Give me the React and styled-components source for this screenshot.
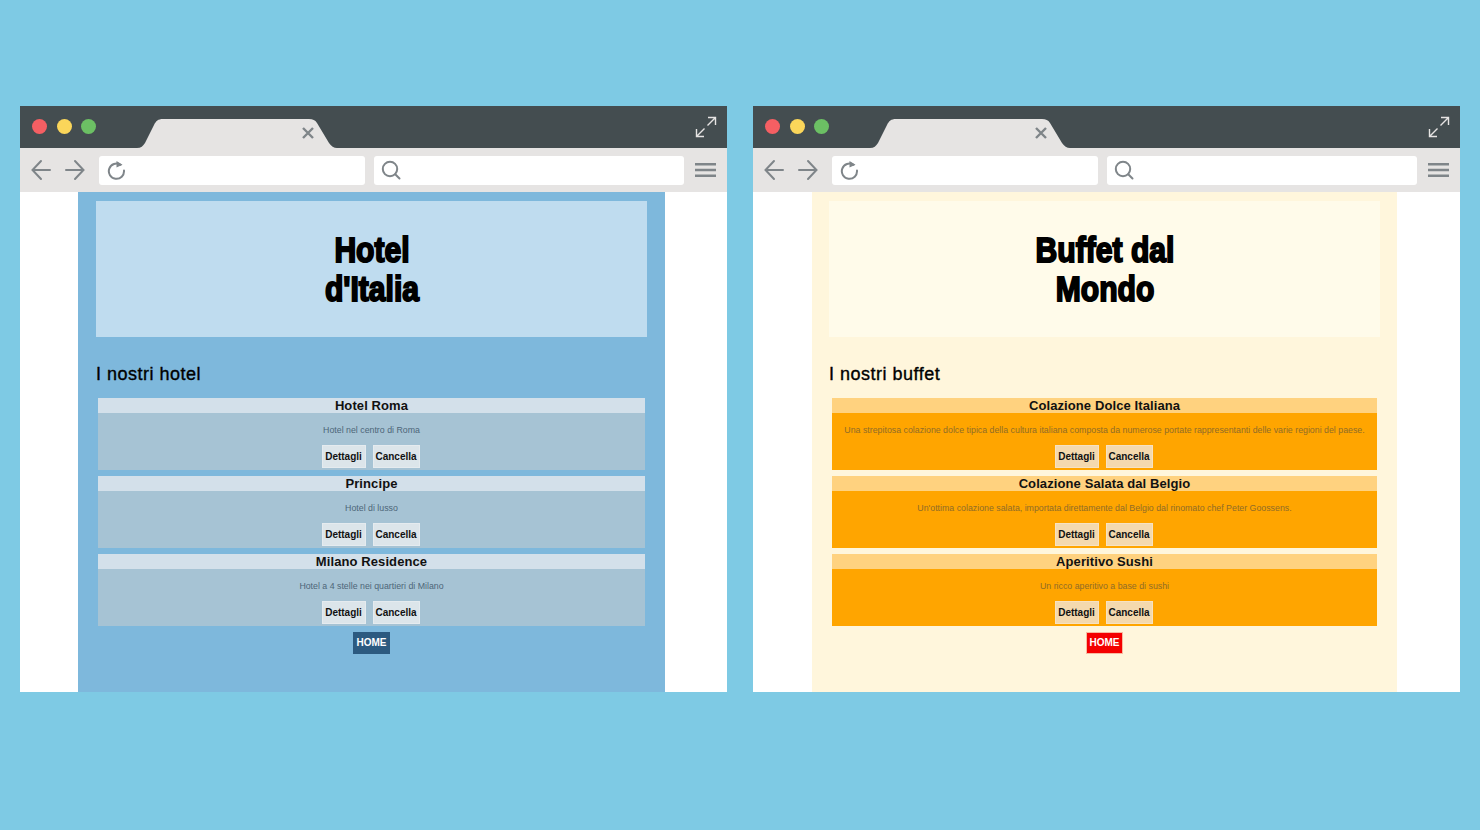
import React from 'react';
import styled, { createGlobalStyle } from 'styled-components';

const themes = {
  hotel: {
    page: '#7eb8dc', header: '#bfdcef', title: '#d3e0ea', body: '#a6c3d4',
    text: '#4d6678', button: '#dce5ea', home: '#2c5a80', homeBorder: '#2c5a80',
  },
  buffet: {
    page: '#fff6dc', header: '#fffbea', title: '#ffd27f', body: '#ffa500',
    text: '#8f6c28', button: '#f4d9ae', home: '#f40000', homeBorder: '#f8b9a0',
  },
};

const Global = createGlobalStyle`
  html, body { margin: 0; padding: 0; }
  body { background: #7ecae4; font-family: "Liberation Sans", Arial, sans-serif; }
`;

const Stage = styled.div`
  width: 1480px;
  height: 830px;
  box-sizing: border-box;
  padding: 106px 20px 0;
  display: flex;
  justify-content: space-between;
  align-items: flex-start;
`;

const Win = styled.section`
  width: 707px;
  height: 586px;
  display: flex;
  flex-direction: column;
  background: #fff;
`;

const TitleBar = styled.div`
  height: 42px;
  flex: none;
  background: #444d50;
  display: flex;
  padding: 0 10px 0 12px;
  box-sizing: border-box;
`;

const Dots = styled.div`
  display: flex;
  gap: 9.5px;
  padding-top: 13px;
`;

const Dot = styled.span`
  width: 15px;
  height: 15px;
  border-radius: 50%;
  background: ${p => p.$color};
`;

const Tab = styled.svg`
  width: 201px;
  height: 29px;
  margin: 13px 0 0 41px;
  flex: none;
  display: block;
`;

const Expand = styled.svg`
  width: 22px;
  height: 22px;
  margin: 10px 0 0 auto;
`;

const ToolBar = styled.div`
  height: 44px;
  flex: none;
  background: #e6e4e3;
  display: flex;
  align-items: center;
  box-sizing: border-box;
  padding: 0 11px 0 11px;
`;

const NavIcon = styled.svg`
  width: 20px;
  height: 24px;
  margin-right: ${p => p.$gap}px;
  flex: none;
`;

const Field = styled.div`
  height: 29px;
  width: ${p => p.$width}px;
  background: #fff;
  border-radius: 3px;
  margin-right: ${p => p.$gap}px;
  display: flex;
  align-items: center;
  padding-left: ${p => p.$inset}px;
  box-sizing: border-box;
  flex: none;
`;

const Burger = styled.svg`
  width: 21px;
  height: 16px;
  flex: none;
`;

const Viewport = styled.div`
  flex: 1;
  display: flex;
  justify-content: center;
  padding-right: 4px;
`;

const Page = styled.main`
  width: ${p => p.$width}px;
  background: ${p => p.$t.page};
  padding-top: 9px;
  display: flex;
  justify-content: center;
`;

const Column = styled.div`
  width: 551px;
`;

const Banner = styled.header`
  height: 136px;
  background: ${p => p.$t.header};
  display: flex;
  align-items: center;
  justify-content: center;
`;

const BigTitle = styled.h1`
  margin: 0;
  width: 200px;
  text-align: center;
  font-family: Impact, "Liberation Sans", sans-serif;
  font-size: 35px;
  line-height: 39px;
  font-weight: 700;
  color: #000;
  -webkit-text-stroke: 1.9px #000;
  transform: scaleX(0.86);
`;

const Heading = styled.h2`
  margin: 27px 0 14px;
  font-size: 18px;
  line-height: 20px;
  font-weight: 400;
  letter-spacing: 0.5px;
  color: #000;
  -webkit-text-stroke: 0.35px #000;
`;

const List = styled.div`
  display: flex;
  flex-direction: column;
  gap: 6px;
  padding: 0 ${p => p.$inset}px;
`;

const Card = styled.article`
  background: ${p => p.$t.body};
  height: 72px;
  text-align: center;
`;

const CardTitle = styled.h3`
  margin: 0;
  height: 15px;
  line-height: 15px;
  background: ${p => p.$t.title};
  font-size: 13px;
  font-weight: 700;
  letter-spacing: 0.1px;
  color: #111;
`;

const CardText = styled.p`
  margin: 0;
  padding-top: 12px;
  height: 20px;
  line-height: 11px;
  font-size: 8.8px;
  color: ${p => p.$t.text};
`;

const Actions = styled.div`
  display: flex;
  justify-content: center;
  gap: 7px;
  padding-right: 2px;
`;

const Btn = styled.button`
  height: 23px;
  width: ${p => p.$w}px;
  padding: 0;
  border: 1px solid rgba(255, 255, 255, 0.25);
  background: ${p => p.$t.button};
  font-family: inherit;
  font-size: 10px;
  font-weight: 700;
  color: #111;
`;

const HomeRow = styled.div`
  display: flex;
  justify-content: center;
  padding-top: 6px;
`;

const Home = styled.a`
  width: 37px;
  height: 22px;
  box-sizing: border-box;
  border: 1px solid ${p => p.$t.homeBorder};
  background: ${p => p.$t.home};
  color: #fff;
  font-size: 10px;
  font-weight: 700;
  line-height: 20px;
  text-align: center;
`;

const stroke = { fill: 'none', stroke: '#7f8589', strokeWidth: 2, strokeLinecap: 'round' };

function Browser({ theme, title, heading, items, width, inset }) {
  const t = themes[theme];
  return (
    <Win>
      <TitleBar>
        <Dots>
          <Dot $color="#f55f63" />
          <Dot $color="#fbd65a" />
          <Dot $color="#6cc064" />
        </Dots>
        <Tab viewBox="0 0 201 29">
          <path d="M0 29 C4 29 6 27 8 24 L17 6 C19 2 21 0 26 0 L172 0 C176 0 178 1 180 4 L192 24 C194 27 197 29 200 29 Z" fill="#e6e4e3" />
          <path d="M166 9 L176 19 M176 9 L166 19" fill="none" stroke="#7f8589" strokeWidth="2.4" />
        </Tab>
        <Expand viewBox="0 0 22 22">
          <path d="M13 1.5 H20.5 V9 M20.5 1.5 L12.5 9.5 M9.5 12.5 L1.5 20.5 M1.5 13 V20.5 H9" fill="none" stroke="#e6e4e3" strokeWidth="1.4" />
        </Expand>
      </TitleBar>
      <ToolBar>
        <NavIcon viewBox="0 0 20 24" $gap={14}>
          <path d="M19 12 H2 M10 3 L1.5 12 L10 21" {...stroke} />
        </NavIcon>
        <NavIcon viewBox="0 0 20 24" $gap={14}>
          <path d="M1 12 H18 M10 3 L18.5 12 L10 21" {...stroke} />
        </NavIcon>
        <Field $width={266} $gap={9} $inset={8}>
          <svg width="20" height="22" viewBox="0 0 20 22">
            <path d="M13.5 5.8 A7.6 7.6 0 1 0 17 11.5" {...stroke} />
            <path d="M9.5 2 L15.5 5.8 L9.5 8.5 Z" fill="#7f8589" />
          </svg>
        </Field>
        <Field $width={310} $gap={11} $inset={7}>
          <svg width="20" height="20" viewBox="0 0 20 20">
            <circle cx="9" cy="9" r="7.2" {...stroke} />
            <path d="M14.2 14.2 L18.5 18.5" {...stroke} />
          </svg>
        </Field>
        <Burger viewBox="0 0 22 16">
          <path d="M0 2 H22 M0 8 H22 M0 14 H22" fill="none" stroke="#7f8589" strokeWidth="2.6" />
        </Burger>
      </ToolBar>
      <Viewport>
        <Page $t={t} $width={width}>
          <Column>
            <Banner $t={t}>
              <BigTitle>{title}</BigTitle>
            </Banner>
            <Heading>{heading}</Heading>
            <List $inset={inset}>
              {items.map(item => (
                <Card key={item.name} $t={t}>
                  <CardTitle $t={t}>{item.name}</CardTitle>
                  <CardText $t={t}>{item.text}</CardText>
                  <Actions>
                    <Btn $t={t} $w={44}>Dettagli</Btn>
                    <Btn $t={t} $w={47}>Cancella</Btn>
                  </Actions>
                </Card>
              ))}
            </List>
            <HomeRow>
              <Home $t={t}>HOME</Home>
            </HomeRow>
          </Column>
        </Page>
      </Viewport>
    </Win>
  );
}

const hotels = [
  { name: 'Hotel Roma', text: 'Hotel nel centro di Roma' },
  { name: 'Principe', text: 'Hotel di lusso' },
  { name: 'Milano Residence', text: 'Hotel a 4 stelle nei quartieri di Milano' },
];

const buffets = [
  { name: 'Colazione Dolce Italiana', text: 'Una strepitosa colazione dolce tipica della cultura italiana composta da numerose portate rappresentanti delle varie regioni del paese.' },
  { name: 'Colazione Salata dal Belgio', text: "Un'ottima colazione salata, importata direttamente dal Belgio dal rinomato chef Peter Goossens." },
  { name: 'Aperitivo Sushi', text: 'Un ricco aperitivo a base di sushi' },
];

export default function App() {
  return (
    <>
      <Global />
      <Stage>
        <Browser theme="hotel" title="Hotel d'Italia" heading="I nostri hotel" items={hotels} width={587} inset={2} />
        <Browser theme="buffet" title="Buffet dal Mondo" heading="I nostri buffet" items={buffets} width={585} inset={3} />
      </Stage>
    </>
  );
}
